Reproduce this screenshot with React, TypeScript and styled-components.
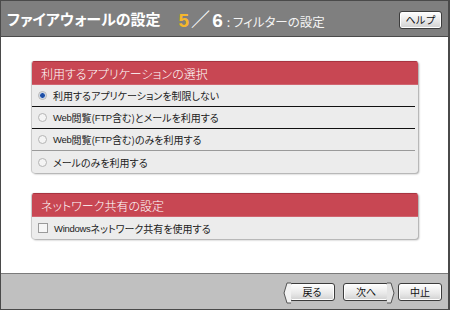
import * as React from "react";
import styled, { createGlobalStyle } from "styled-components";

const GlobalStyle = createGlobalStyle`
  html, body {
    margin: 0;
    padding: 0;
    background: #ffffff;
  }
  body {
    font-family: "Noto Sans CJK JP", "Liberation Sans", sans-serif;
    font-feature-settings: "palt";
  }
`;

const SWindow = styled.div`
  width: 450px;
  height: 310px;
  box-sizing: border-box;
  border: 1px solid #4a4a4a;
  border-right-width: 2px;
  display: flex;
  flex-direction: column;
  background: #ffffff;
`;

const SHeader = styled.div`
  height: 35px;
  background: #7f7f7f;
  border-bottom: 1px solid #4a4a4a;
  display: flex;
  align-items: center;
  padding: 0 6px 0 6px;
`;

const STitle = styled.div`
  color: #ffffff;
  font-size: 15px;
  font-weight: bold;
`;

const SStep = styled.div`
  display: flex;
  align-items: baseline;
  margin-left: 18px;
  color: #ffffff;
  font-family: "Liberation Sans", "Noto Sans CJK JP", sans-serif;
  font-weight: bold;
  font-size: 19px;
`;

const SStepCurrent = styled.span`
  color: #f5b72c;
`;

const SStepSlash = styled.span`
  font-family: "Noto Sans CJK JP", sans-serif;
  font-weight: normal;
  margin: 0 2px;
`;

const SStepName = styled.span`
  font-family: "Noto Sans CJK JP", sans-serif;
  font-weight: normal;
  font-size: 12.5px;
  margin-left: 4px;
  color: #f4f4f4;
`;

const SHelp = styled.button`
  margin-left: auto;
  margin-top: 2px;
  width: 43px;
  height: 18px;
  padding: 0;
  border: 1px solid #3c3c3c;
  border-radius: 3px;
  background: linear-gradient(#ffffff, #e6e6e6 60%, #cfcfcf);
  box-shadow: inset 0 0 0 1px #ffffff;
  font-family: "Noto Sans CJK JP", sans-serif;
  font-size: 10px;
  color: #111;
  line-height: 14px;
`;

const SBody = styled.div`
  flex: 1;
  padding: 24px 30px 0 31px;
  display: flex;
  flex-direction: column;
  gap: 20px;
`;

const SPanel = styled.div`
  background: #ececec;
  border-radius: 3px;
  box-shadow: 1px 1px 2px #a0a0a0, -0.5px 0 1px #c8c8c8;
  overflow: hidden;
`;

const SPanelHeader = styled.div`
  height: 24px;
  background: #c84753;
  border-top: 1px solid #a83440;
  border-bottom: 1px solid #d06570;
  color: #ffffff;
  font-size: 12px;
  font-weight: 300;
  display: flex;
  align-items: center;
  padding-left: 9px;
  box-sizing: border-box;
`;

const SRow = styled.label<{ $line?: "dark" | "light" | "none" }>`
  height: 22px;
  display: flex;
  align-items: center;
  padding-left: 6px;
  font-size: 10px;
  color: #222;
  box-sizing: border-box;
  border-bottom: ${(p) =>
    p.$line === "dark"
      ? "1.5px solid #111"
      : p.$line === "light"
      ? "1.5px solid #9a9a9a"
      : "none"};
  margin: 0 3px 0 0;
`;

const SRadio = styled.span<{ $checked?: boolean }>`
  width: 7px;
  height: 7px;
  border-radius: 50%;
  border: 1px solid #b4b4b4;
  background: ${(p) =>
    p.$checked
      ? "radial-gradient(circle, #1e4fa6 0 2px, #9cb7dd 2.5px, #f4f4f4 3.5px)"
      : "#f4f4f4"};
  margin-right: 6px;
  flex-shrink: 0;
`;

const SCheck = styled.span`
  width: 8px;
  height: 8px;
  border: 1px solid #9a9a9a;
  background: #f6f6f6;
  margin-right: 6px;
  flex-shrink: 0;
`;

const SLatin = styled.span`
  font-family: "Liberation Sans", sans-serif;
  font-size: 9.5px;
  letter-spacing: -0.3px;
`;

const SFooter = styled.div`
  height: 35px;
  background: #c0c0c0;
  border-top: 1px solid #7a7a7a;
  display: flex;
  align-items: center;
  justify-content: flex-end;
  padding: 0 6px 0 0;
  gap: 8px;
`;

const SNavButton = styled.div<{ $dir?: "left" | "right"; $w?: number }>`
  position: relative;
  width: ${(p) => p.$w ?? 46}px;
  height: 18px;
  margin-right: ${(p) => (p.$dir === "right" ? "1px" : "0")};
  border: 1px solid #3c3c3c;
  border-radius: 3px;
  background: linear-gradient(#ffffff, #e8e8e8 60%, #d0d0d0);
  box-shadow: inset 0 0 0 1px #ffffff;
  font-size: 10px;
  color: #111;
  display: flex;
  align-items: center;
  justify-content: center;
  box-sizing: border-box;
`;

const SArrow = styled.svg<{ $dir: "left" | "right" }>`
  position: absolute;
  top: -3px;
  ${(p) => (p.$dir === "left" ? "left: -7px;" : "right: -7px;")}
`;

const Arrow = ({ dir }: { dir: "left" | "right" }) => (
  <SArrow $dir={dir} width="8" height="24" viewBox="0 0 8 24">
    {dir === "left" ? (
      <path d="M8 2 L4 2 L1 12 L4 22 L8 22" fill="#f2f2f2" stroke="#555" strokeWidth="1" />
    ) : (
      <path d="M0 2 L4 2 L7 12 L4 22 L0 22" fill="#e4e4e4" stroke="#555" strokeWidth="1" />
    )}
  </SArrow>
);

const App = () => {
  return (
    <>
      <GlobalStyle />
      <SWindow>
        <SHeader>
          <STitle>ファイアウォールの設定</STitle>
          <SStep>
            <SStepCurrent>5</SStepCurrent>
            <SStepSlash>／</SStepSlash>
            <span>6</span>
            <SStepName>: フィルターの設定</SStepName>
          </SStep>
          <SHelp>ヘルプ</SHelp>
        </SHeader>
        <SBody>
          <SPanel>
            <SPanelHeader>利用するアプリケーションの選択</SPanelHeader>
            <SRow $line="dark">
              <SRadio $checked />
              利用するアプリケーションを制限しない
            </SRow>
            <SRow $line="dark">
              <SRadio />
              <SLatin>Web</SLatin>閲覧(<SLatin>FTP</SLatin>含む)とメールを利用する
            </SRow>
            <SRow $line="light">
              <SRadio />
              <SLatin>Web</SLatin>閲覧(<SLatin>FTP</SLatin>含む)のみを利用する
            </SRow>
            <SRow $line="none">
              <SRadio />
              メールのみを利用する
            </SRow>
          </SPanel>
          <SPanel>
            <SPanelHeader>ネットワーク共有の設定</SPanelHeader>
            <SRow $line="none">
              <SCheck />
              <SLatin>Windows</SLatin>ネットワーク共有を使用する
            </SRow>
          </SPanel>
        </SBody>
        <SFooter>
          <SNavButton $dir="left">
            <Arrow dir="left" />
            戻る
          </SNavButton>
          <SNavButton $dir="right">
            <Arrow dir="right" />
            次へ
          </SNavButton>
          <SNavButton $w={44}>中止</SNavButton>
        </SFooter>
      </SWindow>
    </>
  );
};

export default App;
